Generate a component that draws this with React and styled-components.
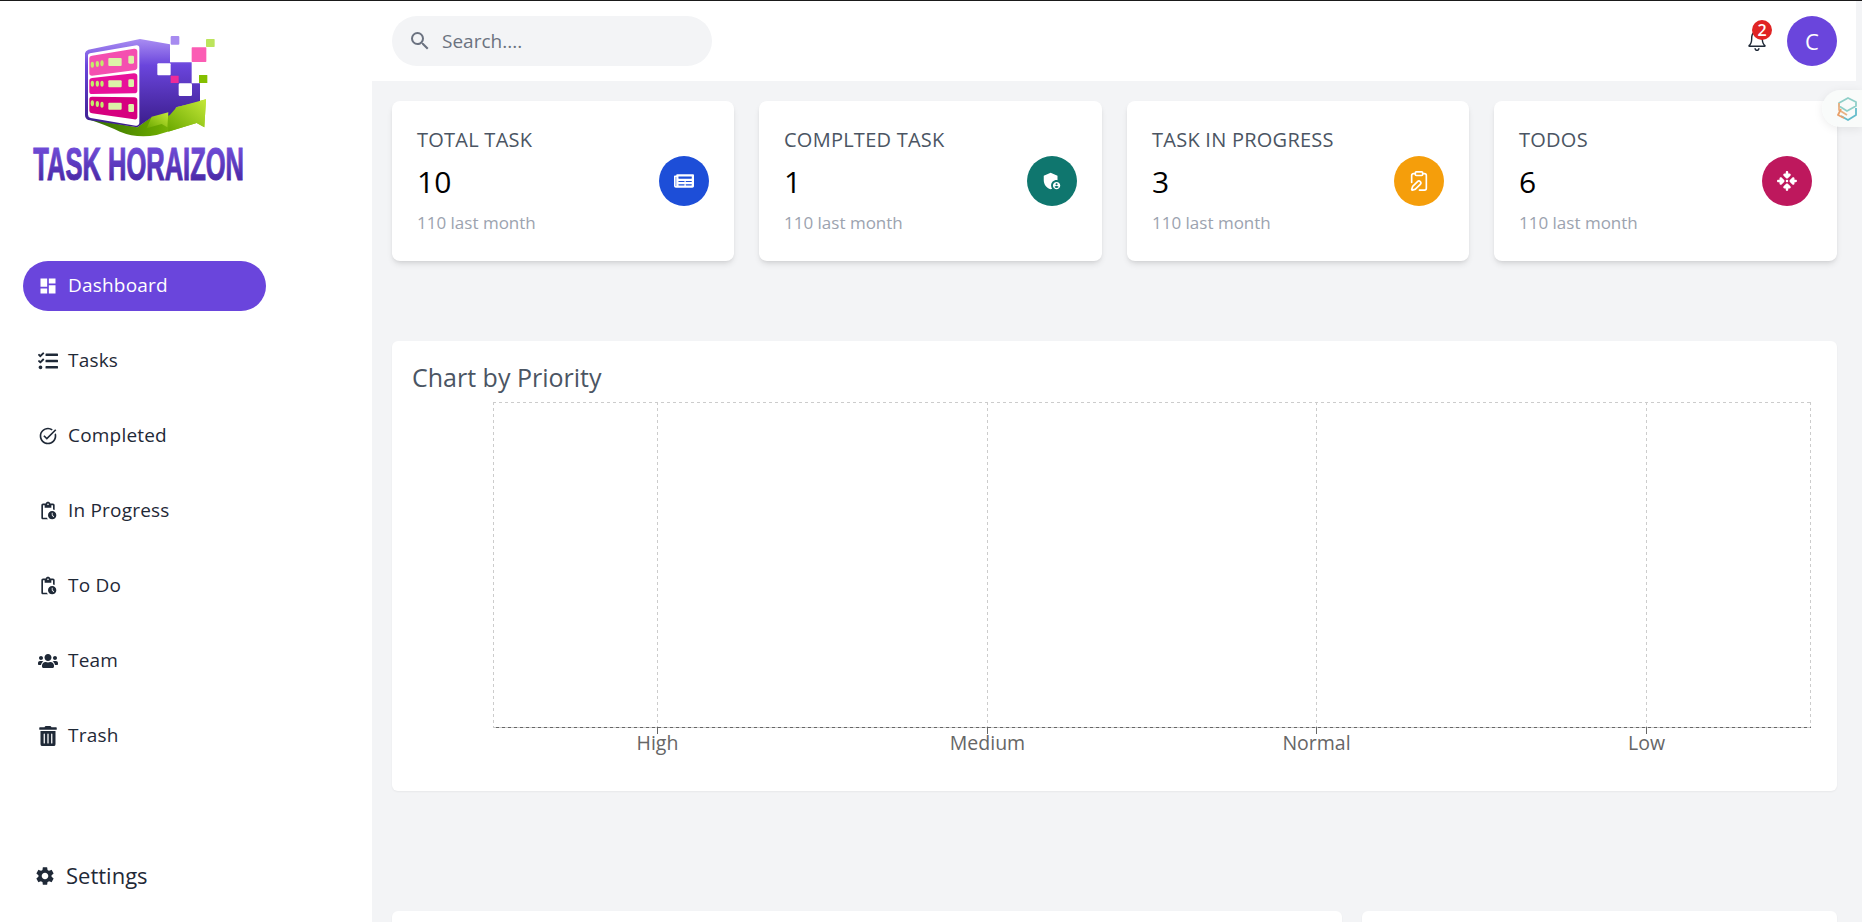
import styled, { createGlobalStyle } from 'styled-components';
import { MdDashboard, MdOutlineSearch, MdTaskAlt, MdOutlinePendingActions, MdAdminPanelSettings, MdSettings } from 'react-icons/md';
import { FaTasks, FaUsers, FaTrashAlt, FaNewspaper } from 'react-icons/fa';
import { FaArrowsToDot } from 'react-icons/fa6';
import { IoIosNotificationsOutline } from 'react-icons/io';
import { ClipboardPen } from 'lucide-react';

const GlobalStyle = createGlobalStyle`
  html, body {
    margin: 0;
    padding: 0;
    overflow: hidden;
    background: #f3f4f6;
  }
  * {
    box-sizing: border-box;
  }
  body {
    font-family: "Open Sans", "Noto Sans", sans-serif;
  }
`;

const Shell = styled.div`
  display: flex;
  position: relative;
  height: 922px;
  width: 1862px;
  overflow: hidden;
  border-top: 1px solid #1a1a1a;
  background: #f3f4f6;
`;

const Sidebar = styled.aside`
  display: flex;
  flex-direction: column;
  flex: none;
  width: 372px;
  padding: 19px 0 31px 20px;
  background: #fff;
`;

const LogoMark = styled.svg`
  display: block;
  flex: none;
  width: 240px;
  height: 170px;
`;

const Nav = styled.nav`
  display: flex;
  flex-direction: column;
  gap: 25px;
  margin: 71px 0 0 3px;
`;

const NavItem = styled.a`
  display: flex;
  align-items: center;
  gap: 10px;
  width: 243px;
  height: 50px;
  padding-left: 15px;
  border-radius: 25px;
  font-size: 19px;
  letter-spacing: 0.2px;
  color: ${(p) => (p.$active ? '#fff' : '#1f2937')};
  background: ${(p) => (p.$active ? '#6a45dc' : 'transparent')};

  & svg {
    flex: none;
    width: 20px;
    height: 20px;
  }
`;

const NavLabel = styled.span`
  margin-top: -2px;
`;

const SettingsLink = styled.a`
  display: flex;
  align-items: center;
  gap: 10px;
  height: 30px;
  margin: auto 0 0 14px;
  font-size: 22px;
  color: #1f2937;

  & svg {
    width: 22px;
    height: 22px;
  }
`;

const Main = styled.main`
  display: flex;
  flex-direction: column;
  flex: none;
  width: 1484px;
`;

const Topbar = styled.header`
  display: flex;
  align-items: center;
  justify-content: space-between;
  flex: none;
  height: 80px;
  padding: 0 19px 0 20px;
  background: #fff;
`;

const SearchBox = styled.div`
  display: flex;
  align-items: center;
  gap: 10px;
  width: 320px;
  height: 50px;
  padding-left: 16px;
  border-radius: 25px;
  background: #f3f4f6;
  color: #6b7280;
  font-size: 19px;

  & svg {
    width: 24px;
    height: 24px;
  }
`;

const TopActions = styled.div`
  display: flex;
  align-items: center;
  gap: 16px;
`;

const Bell = styled.div`
  position: relative;
  width: 28px;
  height: 28px;
  margin-bottom: 3px;
  color: #1f2937;

  & svg {
    display: block;
    width: 28px;
    height: 28px;
  }
`;

const BellBadge = styled.span`
  position: absolute;
  top: -6px;
  left: 9px;
  display: flex;
  align-items: center;
  justify-content: center;
  width: 20px;
  height: 20px;
  border-radius: 50%;
  background: #e02424;
  color: #fff;
  font-size: 16px;
  font-weight: 600;
`;

const Avatar = styled.div`
  display: flex;
  align-items: center;
  justify-content: center;
  width: 50px;
  height: 50px;
  border-radius: 50%;
  background: #6a45dc;
  color: #fff;
  font-size: 22px;
  font-weight: 500;
`;

const Content = styled.div`
  display: flex;
  flex-direction: column;
  padding: 20px 19px 0 20px;
`;

const StatsRow = styled.section`
  display: grid;
  grid-template-columns: 342px 343px 342px 343px;
  gap: 25px;
  margin-bottom: 80px;
`;

const StatCard = styled.article`
  display: flex;
  align-items: center;
  justify-content: space-between;
  height: 160px;
  padding: 25px;
  border-radius: 8px;
  background: #fff;
  box-shadow: 0 4px 6px -1px rgba(0, 0, 0, 0.1), 0 2px 4px -2px rgba(0, 0, 0, 0.1);
`;

const StatText = styled.div`
  display: flex;
  flex-direction: column;
  justify-content: space-between;
  height: 110px;
`;

const StatTitle = styled.p`
  margin: 0;
  font-size: 20px;
  line-height: 28px;
  letter-spacing: 0.25px;
  color: #4b5563;
`;

const StatValue = styled.span`
  font-size: 30px;
  line-height: 36px;
  font-weight: 500;
  color: #000;
`;

const StatNote = styled.span`
  font-size: 17px;
  line-height: 26px;
  color: #9ca3af;
`;

const StatIcon = styled.div`
  display: flex;
  align-items: center;
  justify-content: center;
  flex: none;
  width: 50px;
  height: 50px;
  border-radius: 50%;
  background: ${(p) => p.$color};
  color: #fff;
`;

const ChartCard = styled.section`
  flex: none;
  height: 450px;
  padding: 20px;
  margin-bottom: 120px;
  border-radius: 6px;
  background: #fff;
  box-shadow: 0 1px 2px rgba(0, 0, 0, 0.05);
`;

const ChartTitle = styled.h4`
  margin: 0;
  height: 36px;
  font-size: 25px;
  line-height: 32px;
  font-weight: 500;
  color: #4b5563;
`;

const ChartSvg = styled.svg`
  display: block;
  width: 1405px;
  height: 374px;
`;

const BottomRow = styled.section`
  display: flex;
  gap: 20px;
  flex: none;
`;

const BottomCard = styled.div`
  flex: ${(p) => p.$flex};
  height: 400px;
  border-radius: 6px;
  background: #fff;
  box-shadow: 0 1px 2px rgba(0, 0, 0, 0.05);
`;

const FloatTab = styled.div`
  position: absolute;
  top: 89px;
  right: 0;
  display: flex;
  align-items: center;
  width: 40px;
  height: 37px;
  padding-left: 15px;
  border-radius: 19px 0 0 19px;
  background: rgba(249, 251, 250, 0.96);
  box-shadow: 0 2px 10px rgba(0, 0, 0, 0.08);
`;

const stats = [
  { title: 'TOTAL TASK', value: 10, color: '#1d4ed8', icon: <FaNewspaper size={20} /> },
  { title: 'COMPLTED TASK', value: 1, color: '#0f766e', icon: <MdAdminPanelSettings size={22} /> },
  { title: 'TASK IN PROGRESS', value: 3, color: '#f59e0b', icon: <ClipboardPen size={22} strokeWidth={1.8} /> },
  { title: 'TODOS', value: 6, color: '#be185d', icon: <FaArrowsToDot size={20} /> },
];

const links = [
  { label: 'Dashboard', icon: <MdDashboard />, active: true },
  { label: 'Tasks', icon: <FaTasks /> },
  { label: 'Completed', icon: <MdTaskAlt /> },
  { label: 'In Progress', icon: <MdOutlinePendingActions /> },
  { label: 'To Do', icon: <MdOutlinePendingActions /> },
  { label: 'Team', icon: <FaUsers /> },
  { label: 'Trash', icon: <FaTrashAlt /> },
];

const priorities = ['High', 'Medium', 'Normal', 'Low'];

const Logo = () => (
  <LogoMark viewBox="0 0 720 510">
    <defs>
      <linearGradient id="body" x1="0" y1="0" x2="0" y2="1">
        <stop offset="0" stopColor="#a98df2" />
        <stop offset="0.3" stopColor="#6a45dc" />
        <stop offset="1" stopColor="#3a1c8a" />
      </linearGradient>
      <linearGradient id="swoosh" x1="0" y1="0" x2="1" y2="0">
        <stop offset="0" stopColor="#2f6a00" />
        <stop offset="0.6" stopColor="#6aa800" />
        <stop offset="1" stopColor="#a8d820" />
      </linearGradient>
      <linearGradient id="arrow" x1="0" y1="1" x2="1" y2="0">
        <stop offset="0" stopColor="#6aa800" />
        <stop offset="1" stopColor="#c4e838" />
      </linearGradient>
      <linearGradient id="word" x1="0" y1="0" x2="0" y2="1">
        <stop offset="0" stopColor="#7a55e4" />
        <stop offset="1" stopColor="#40209a" />
      </linearGradient>
    </defs>
    <path d="M200 296 Q262 316 300 335 Q350 356 410 345 L530 309 L553 322 L558 238 L468 262 L470 285 L445 278 L395 290 L352 322 Z" fill="url(#swoosh)" />
    <path d="M195 100 Q196 92 205 89 L360 57 L450 73 L450 127 L515 127 L515 190 L540 190 L540 245 L468 262 L465 285 L395 292 L352 322 L205 300 Q195 296 195 285 Z" fill="url(#body)" />
    <path d="M470 262 L558 238 L553 322 L530 309 L445 335 L445 290 Z" fill="url(#arrow)" />
    <path d="M395 290 L445 277 L442 322 L425 312 L380 325 Z" fill="url(#arrow)" />
    <path d="M210 100 L350 76 Q358 76 358 84 L358 310 Q356 319 347 317 L212 294 Q204 292 204 284 L204 106 Q204 101 210 100 Z" fill="#fff" />
    <path d="M216 107 L342 86 Q352 85 352 94 L352 142 Q352 150 342 151 L216 167 Q208 167 208 160 L208 114 Q208 108 216 107 Z" fill="#f44fb0" />
    <path d="M216 174 L342 160 Q352 160 352 168 L352 212 Q352 220 342 220 L216 222 Q208 222 208 215 L208 181 Q208 175 216 174 Z" fill="#e8109a" />
    <path d="M216 230 L342 232 Q352 232 352 240 L352 290 Q352 300 342 298 L216 280 Q208 278 208 272 L208 236 Q208 230 216 230 Z" fill="#d6007f" />
    <g fill="#c5ea6c">
      <ellipse cx="217" cy="134" rx="5" ry="9" />
      <ellipse cx="232" cy="132" rx="5" ry="9" />
      <ellipse cx="246" cy="130" rx="5" ry="9" />
      <rect x="265" y="114" width="40" height="24" rx="3" fill="#dcf3a8" />
      <rect x="325" y="107" width="17" height="24" rx="4" fill="#dcf3a8" />
      <ellipse cx="217" cy="191" rx="5" ry="9" />
      <ellipse cx="232" cy="191" rx="5" ry="9" />
      <ellipse cx="246" cy="191" rx="5" ry="9" />
      <rect x="265" y="181" width="40" height="21" rx="3" fill="#dcf3a8" />
      <rect x="325" y="178" width="17" height="23" rx="4" fill="#dcf3a8" />
      <ellipse cx="217" cy="250" rx="5" ry="9" />
      <ellipse cx="232" cy="252" rx="5" ry="9" />
      <ellipse cx="246" cy="254" rx="5" ry="9" />
      <rect x="265" y="248" width="40" height="21" rx="3" fill="#dcf3a8" />
      <rect x="325" y="252" width="17" height="24" rx="4" fill="#dcf3a8" />
    </g>
    <rect x="452" y="48" width="26" height="26" rx="3" fill="#a78bf0" />
    <rect x="558" y="57" width="26" height="24" rx="2" fill="#bce45c" />
    <rect x="515" y="82" width="44" height="44" rx="2" fill="#fb5cb4" />
    <rect x="412" y="130" width="40" height="36" rx="3" fill="#fff" />
    <rect x="452" y="167" width="24" height="22" rx="1" fill="#ee2b98" />
    <rect x="537" y="165" width="25" height="24" rx="1" fill="#84bf00" />
    <rect x="476" y="190" width="40" height="38" rx="4" fill="#fff" />
    <text
      transform="scale(1 1.7)"
      x="40"
      y="282"
      textLength="632"
      lengthAdjust="spacingAndGlyphs"
      fontFamily='"Liberation Sans", sans-serif'
      fontWeight="700"
      fontSize="80"
      fill="url(#word)"
      stroke="url(#word)"
      strokeWidth="2"
    >
      TASK HORAIZON
    </text>
  </LogoMark>
);

const PriorityChart = () => {
  const left = 81;
  const right = 1399;
  const top = 5;
  const bottom = 330;
  const step = (right - left) / priorities.length;
  const ticks = priorities.map((name, i) => ({ name, x: Math.floor(left + step * (i + 0.5)) + 0.5 }));

  return (
    <ChartSvg viewBox="0 0 1405 374">
      <g fill="none" stroke="#ccc" strokeDasharray="3 3">
        <line x1={left} x2={right} y1={top + 0.5} y2={top + 0.5} />
        <line x1={left + 0.5} x2={left + 0.5} y1={top} y2={bottom} />
        <line x1={right - 0.5} x2={right - 0.5} y1={top} y2={bottom} />
        {ticks.map((t) => (
          <line key={t.name} x1={t.x} x2={t.x} y1={top} y2={bottom} />
        ))}
      </g>
      <line x1={left} x2={right} y1={bottom + 0.5} y2={bottom + 0.5} stroke="#666" />
      <line x1={left} x2={right} y1={bottom + 0.5} y2={bottom + 0.5} stroke="#ccc" strokeDasharray="3 3" />
      {ticks.map((t) => (
        <g key={t.name}>
          <line x1={t.x} x2={t.x} y1={bottom} y2={bottom + 7} stroke="#666" />
          <text x={t.x} y={353} textAnchor="middle" fill="#666" fontSize="19.5">
            {t.name}
          </text>
        </g>
      ))}
    </ChartSvg>
  );
};

const App = () => (
  <>
    <GlobalStyle />
    <Shell>
      <Sidebar>
        <Logo />
        <Nav>
          {links.map((link) => (
            <NavItem key={link.label} $active={link.active}>
              {link.icon}
              <NavLabel>{link.label}</NavLabel>
            </NavItem>
          ))}
        </Nav>
        <SettingsLink>
          <MdSettings />
          <NavLabel>Settings</NavLabel>
        </SettingsLink>
      </Sidebar>
      <Main>
        <Topbar>
          <SearchBox>
            <MdOutlineSearch />
            Search....
          </SearchBox>
          <TopActions>
            <Bell>
              <IoIosNotificationsOutline />
              <BellBadge>2</BellBadge>
            </Bell>
            <Avatar>C</Avatar>
          </TopActions>
        </Topbar>
        <Content>
          <StatsRow>
            {stats.map((stat) => (
              <StatCard key={stat.title}>
                <StatText>
                  <StatTitle>{stat.title}</StatTitle>
                  <StatValue>{stat.value}</StatValue>
                  <StatNote>110 last month</StatNote>
                </StatText>
                <StatIcon $color={stat.color}>{stat.icon}</StatIcon>
              </StatCard>
            ))}
          </StatsRow>
          <ChartCard>
            <ChartTitle>Chart by Priority</ChartTitle>
            <PriorityChart />
          </ChartCard>
          <BottomRow>
            <BottomCard $flex="0 0 950px" />
            <BottomCard $flex="1" />
          </BottomRow>
        </Content>
      </Main>
      <FloatTab>
        <svg width="20" height="24" viewBox="0 0 20 24" fill="none" strokeWidth="1.8" strokeLinejoin="round">
          <path d="M2 6 L11 1 L19 5 L19 9 L10 14 L2 9 Z" stroke="#8fcfc8" />
          <path d="M2 6 L2 13 L10 18" stroke="#eab183" />
          <path d="M19 11 L19 18 L11 23 L4 19" stroke="#63bccb" />
          <path d="M4 12 L1 18 L7 21" stroke="#e9a06a" />
        </svg>
      </FloatTab>
    </Shell>
  </>
);

export default App;
